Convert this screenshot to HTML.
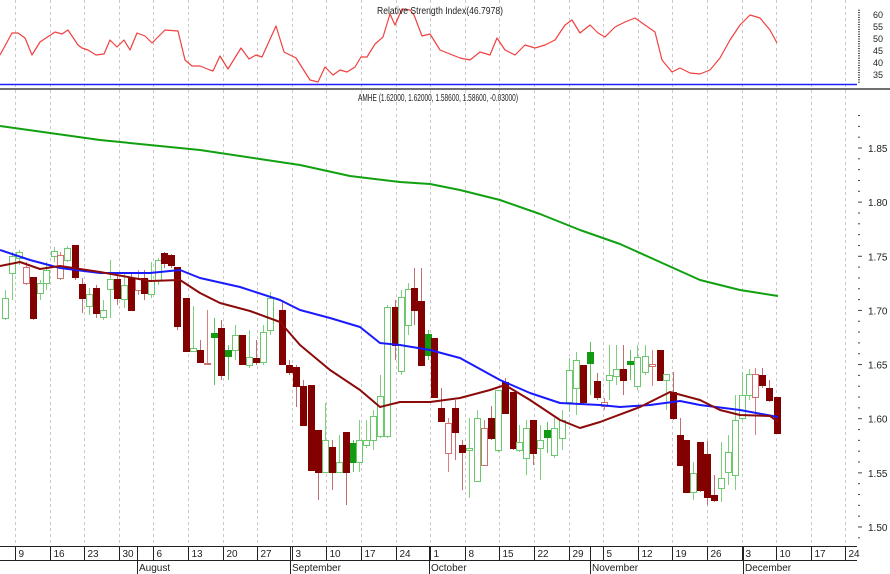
<!DOCTYPE html>
<html><head><meta charset="utf-8"><style>
html,body{margin:0;padding:0;background:#fff;width:890px;height:574px;overflow:hidden}
svg{display:block;font-family:"Liberation Sans",sans-serif}
</style></head><body>
<svg id="s" width="890" height="574" viewBox="0 0 890 574" xmlns="http://www.w3.org/2000/svg">
<rect width="890" height="574" fill="#fff"/>
<g id="grid"></g>
<g id="cand"></g>
<g id="lines"></g>
<g id="axis"></g>
<text x="440" y="14" font-size="10" text-anchor="middle" fill="#222" textLength="126" lengthAdjust="spacingAndGlyphs">Relative Strength Index(46.7978)</text>
<text x="438" y="101" font-size="10" text-anchor="middle" fill="#222" textLength="160" lengthAdjust="spacingAndGlyphs">AMHE (1.62000, 1.62000, 1.58600, 1.58600, -0.03000)</text>
</svg>
<script>
var NS="http://www.w3.org/2000/svg";
function el(p,t,a,txt){var e=document.createElementNS(NS,t);for(var k in a)e.setAttribute(k,a[k]);if(txt!=null)e.textContent=txt;document.getElementById(p).appendChild(e);return e;}
// grid
var wk=["9","16","23","30","6","13","20","27","3","10","17","24","1","8","15","22","29","5","12","19","26","3","10","17","24"];
for(var i=0;i<wk.length;i++){
 var x=Math.round(15+34.6*i)+0.5;
 el("grid","line",{x1:x,y1:0,x2:x,y2:545,stroke:"#c8c8c8","stroke-dasharray":"3,3","stroke-width":1});
 el("axis","line",{x1:x,y1:546,x2:x,y2:561,stroke:"#222","stroke-width":1});
 el("axis","text",{x:x+3,y:557,"font-size":"10",fill:"#222"},wk[i]);
}
var months=[["August",137],["September",290],["October",429],["November",590],["December",743]];
months.forEach(function(m){el("axis","line",{x1:m[1]+.5,y1:546,x2:m[1]+.5,y2:574,stroke:"#222"});el("axis","text",{x:m[1]+2,y:571,"font-size":"10",fill:"#222"},m[0]);});
el("axis","line",{x1:0,y1:546.5,x2:857,y2:546.5,stroke:"#222"});
el("axis","line",{x1:0,y1:560.5,x2:857,y2:560.5,stroke:"#222"});
// separators
el("axis","line",{x1:0,y1:84.5,x2:857,y2:84.5,stroke:"#2020ff","stroke-width":1.5});
el("axis","rect",{x:0,y:88,width:890,height:2,fill:"#707070"});
// right axis
for(var v=32;v<=62;v++){var y=15+(60-v)*2.4;el("axis","line",{x1:858,y1:y,x2:860,y2:y,stroke:"#444"});}
[60,55,50,45,40,35].forEach(function(v){el("axis","text",{x:873,y:15+(60-v)*2.4+3,"font-size":"9",fill:"#222"},v);});
function py(p){return 148+(1.85-p)/0.05*54.14;}
for(var k=147;k<=188;k++){var p=k/100,y=py(p);if(y<108||y>540)continue;el("axis","line",{x1:858,y1:y,x2:(k%5==0?862:860),y2:y,stroke:"#444"});
 if(k%5==0)el("axis","text",{x:868,y:y+4,"font-size":"10",fill:"#222"},p.toFixed(2));}
// candles [x,top,bottom,whiskTop,whiskBot,type]
var C=[[5,298,318,290,320,'g'],[12,256,273,252,300,'g'],[19,252,258,250,265,'g'],[26,267,283,262,285,'p'],[33,277,318,277,320,'r'],[40,283,293,280,300,'g'],[46,270,283,262,290,'g'],[54,251,256,247,262,'g'],[60,255,278,252,280,'p'],[67,248,260,246,262,'g'],[75,245,277,245,280,'r'],[82,284,298,278,313,'r'],[89,294,306,288,315,'g'],[96,288,313,285,318,'r'],[103,310,317,300,320,'g'],[110,279,289,260,318,'g'],[117,279,298,275,305,'r'],[124,285,299,272,308,'g'],[131,278,310,272,310,'r'],[138,278,290,270,295,'p'],[144,278,293,270,300,'r'],[151,280,294,262,298,'g'],[158,260,280,258,285,'g'],[164,253,263,252,268,'r'],[171,255,265,254,268,'r'],[177,267,326,267,330,'r'],[186,298,351,298,352,'r'],[193,348,351,306,352,'g'],[200,350,362,340,362,'r'],[207,363,364,310,364,'p'],[214,333,337,318,385,'G'],[221,328,375,320,380,'r'],[228,350,356,345,380,'G'],[235,335,350,325,360,'g'],[242,335,364,335,364,'r'],[249,357,365,330,368,'g'],[256,358,362,340,365,'r'],[263,332,362,325,365,'g'],[270,298,330,292,335,'g'],[282,310,364,300,364,'r'],[289,365,372,360,375,'r'],[296,367,386,365,407,'r'],[303,386,425,380,425,'r'],[311,385,470,385,470,'r'],[318,430,472,430,500,'r'],[325,440,472,403,472,'g'],[332,447,472,440,490,'r'],[339,462,472,435,472,'g'],[346,432,472,432,505,'r'],[353,443,462,440,472,'G'],[359,440,462,420,472,'g'],[366,440,445,420,448,'g'],[373,416,440,410,450,'g'],[380,396,436,375,438,'g'],[387,307,436,305,438,'g'],[395,307,345,300,360,'r'],[401,297,371,290,375,'g'],[408,289,325,283,335,'g'],[414,288,310,268,325,'r'],[421,301,365,268,365,'r'],[428,334,355,330,360,'G'],[434,338,397,338,397,'r'],[441,408,421,388,420,'r'],[448,423,453,418,472,'p'],[455,408,432,400,460,'r'],[462,445,452,440,490,'r'],[469,448,450,418,498,'g'],[477,418,481,410,482,'g'],[484,428,465,420,465,'p'],[491,418,438,406,440,'r'],[498,390,450,390,452,'g'],[505,382,413,378,413,'r'],[513,392,448,392,450,'r'],[519,442,450,425,452,'g'],[526,428,458,420,475,'g'],[533,420,453,420,465,'r'],[540,440,448,425,480,'g'],[547,430,437,422,453,'G'],[554,428,455,418,458,'g'],[562,420,438,410,450,'g'],[569,370,402,358,412,'g'],[576,360,388,352,415,'g'],[583,365,402,365,405,'r'],[590,352,363,342,395,'G'],[597,381,397,373,400,'r'],[604,402,406,398,410,'p'],[609,375,380,345,400,'g'],[616,369,376,345,385,'g'],[623,369,380,345,395,'r'],[630,361,364,350,380,'G'],[637,357,386,345,390,'g'],[645,356,372,345,375,'g'],[652,364,366,350,386,'p'],[660,350,380,350,380,'r'],[666,374,380,374,410,'g'],[673,392,418,372,420,'r'],[680,435,465,418,465,'r'],[686,440,492,440,492,'r'],[693,473,492,462,500,'g'],[700,442,490,442,492,'r'],[707,454,497,441,505,'r'],[714,495,500,475,502,'r'],[721,478,488,442,502,'g'],[728,452,472,435,485,'g'],[735,420,475,395,490,'g'],[742,395,418,372,420,'g'],[749,374,395,369,400,'g'],[755,374,397,368,435,'p'],[762,375,385,368,388,'r'],[769,388,400,380,402,'r'],[777,397,433,397,433,'r']];
C.forEach(function(c){
 var x=c[0],t=c[1],b=Math.max(c[2],c[1]+1),ty=c[5];
 var wc={g:"#7fd07f",p:"#d88080",r:"#c07070",G:"#60c060"}[ty];
 el("cand","line",{x1:x+.5,y1:c[3],x2:x+.5,y2:c[4],stroke:wc});
 if(ty=='g')el("cand","rect",{x:x-2.5,y:t+.5,width:6,height:b-t,fill:"#fff",stroke:"#6cc86c"});
 else if(ty=='p')el("cand","rect",{x:x-2.5,y:t+.5,width:6,height:b-t,fill:"#fff",stroke:"#d07070"});
 else if(ty=='G')el("cand","rect",{x:x-3,y:t,width:7,height:b-t+1,fill:"#139a13"});
 else el("cand","rect",{x:x-3,y:t,width:7,height:b-t+1,fill:"#820000"});
});
function pl(pts,col,w){el("lines","polyline",{points:pts,fill:"none",stroke:col,"stroke-width":w,"stroke-linejoin":"round"});}
pl("0,126 100,140 200,150 300,165 350,176 400,182 430,184 460,190 500,200 540,214 580,230 620,244 660,262 700,280 740,290 778,296","#10a010",2);
pl("0,250 30,260 60,268 100,273 150,273 180,270 200,278 240,287 280,300 300,310 330,318 360,327 380,343 400,345 430,350 460,358 500,380 530,393 560,403 600,405 620,407 650,405 680,401 700,405 740,410 778,417","#1a1aff",2);
pl("0,266 20,262 40,269 60,266 100,272 150,281 180,280 200,293 220,303 250,311 280,322 300,345 330,370 360,390 380,407 400,402 430,402 460,398 490,390 505,385 530,400 560,420 580,428 600,422 640,407 670,392 700,400 720,410 740,415 770,416 778,422","#8b0a0a",2);
pl("0,55 12,33 18,33 25,38 32,55 40,42 55,32 62,34 68,30 78,45 82,48 88,50 96,55 104,54 110,40 117,47 124,40 130,50 137,33 145,36 152,43 165,30 178,31 185,60 192,66 200,66 210,70 213,71 220,56 228,69 241,48 249,59 256,55 262,57 276,26 284,52 296,58 310,80 318,82 325,67 333,75 340,70 347,72 355,67 361,57 367,57 375,44 383,37 390,14 395,25 402,9 410,10 414,15 422,36 430,34 440,50 450,54 460,58 470,60 480,52 490,55 497,38 505,50 515,55 525,45 535,48 545,45 555,40 565,25 572,20 580,33 590,25 598,33 605,37 615,27 625,22 635,18 645,25 655,32 662,60 672,72 680,68 690,73 700,74 710,70 720,58 730,40 740,25 750,15 760,18 770,30 777,43","#f04040",1.2);
</script>
</body></html>
